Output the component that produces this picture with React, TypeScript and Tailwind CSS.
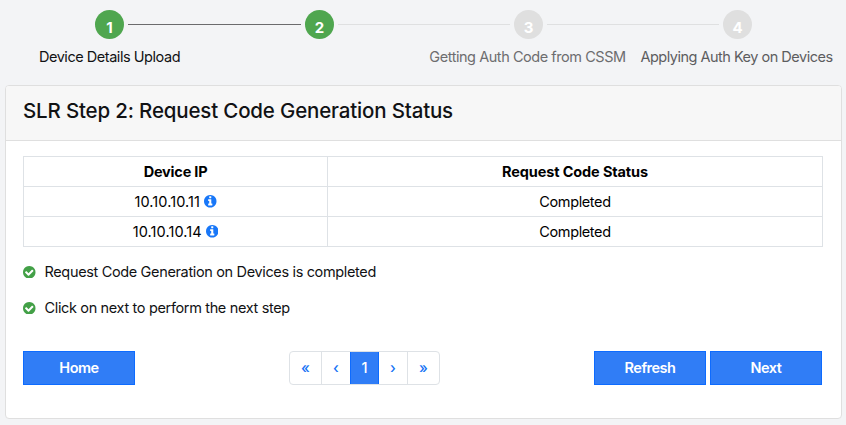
const DISC =
  "q0 209-103 385.5t-279.5 279.5-385.5 103-385.5-103-279.5-279.5-103-385.5 103-385.5 279.5-279.5 385.5-103 385.5 103 279.5 279.5 103 385.5z";

function InfoIcon() {
  return (
    <svg viewBox="128 128 1536 1536" className="size-[12.5px] fill-[#1877f8]">
      <path
        d={
          "M1152 1376v-160q0-14-9-23t-23-9h-96v-512q0-14-9-23t-23-9h-320q-14 0-23 9t-9 23v160q0 14 9 23t23 9h96v320h-96q-14 0-23 9t-9 23v160q0 14 9 23t23 9h448q14 0 23-9t9-23zm-128-896v-160q0-14-9-23t-23-9h-192q-14 0-23 9t-9 23v160q0 14 9 23t23 9h192q14 0 23-9t9-23zm640 416" +
          DISC
        }
      />
    </svg>
  );
}

function CheckIcon() {
  return (
    <svg viewBox="128 128 1536 1536" className="size-[12.5px] fill-[#43a047]">
      <path
        d={
          "M1412 734q0-28-18-46l-91-90q-19-19-45-19t-45 19l-408 407-226-226q-19-19-45-19t-45 19l-91 90q-18 18-18 46 0 27 18 45l362 362q19 19 45 19 27 0 46-19l543-543q18-18 18-45zm252 162" +
          DISC
        }
      />
    </svg>
  );
}

const devices = [
  { ip: "10.10.10.11", status: "Completed" },
  { ip: "10.10.10.14", status: "Completed" },
];

function StepCircle({ n, done }: { n: number; done?: boolean }) {
  return (
    <div
      className={`flex size-[29px] shrink-0 items-center justify-center rounded-full pt-[5px] text-[15px] leading-none font-bold text-white ${done ? "bg-[#4fa64f]" : "bg-[#dfdfdf]"}`}
    >
      {n}
    </div>
  );
}

function Stepper() {
  return (
    <nav className="h-[85px] pt-[10px]">
      <div className="flex items-center gap-1 pr-[94px] pl-[95px]">
        <StepCircle n={1} done />
        <div className="h-px w-[173px] bg-[#6b6b6d]" />
        <StepCircle n={2} done />
        <div className="h-px flex-1 bg-[#dfe0e1]" />
        <StepCircle n={3} />
        <div className="h-px flex-1 bg-[#dfe0e1]" />
        <StepCircle n={4} />
      </div>
      <div className="ml-[5px] grid w-[836px] grid-cols-4 pt-[8px] text-center leading-5 whitespace-nowrap">
        <span className="tracking-[-0.46px]">Device Details Upload</span>
        <span />
        <span className="tracking-[-0.45px] text-[#6d6d6f]">Getting Auth Code from CSSM</span>
        <span className="tracking-[-0.5px] text-[#5d5d5f]">Applying Auth Key on Devices</span>
      </div>
    </nav>
  );
}

function Message({ text }: { text: string }) {
  return (
    <p className="flex h-9 items-center gap-[9px]">
      <CheckIcon />
      <span className="tracking-[-0.35px]">{text}</span>
    </p>
  );
}

function Button({ label }: { label: string }) {
  return (
    <button className="h-[34px] w-[112px] border border-[#0d6bff] bg-[#307df6] font-semibold tracking-[-0.5px] text-white">
      {label}
    </button>
  );
}

function Pagination() {
  return (
    <div className="flex h-[34px] w-[151px] overflow-hidden rounded border border-[#dee2e6] font-medium text-[#1673f5]">
      <button className="w-8 border-r border-[#dee2e6]">«</button>
      <button className="w-7">‹</button>
      <button className="-my-px h-[34px] w-[29px] border border-[#0d6bff] bg-[#307df6] text-white">1</button>
      <button className="w-[29px] border-r border-[#dee2e6]">›</button>
      <button className="flex-1">»</button>
    </div>
  );
}

export default function App() {
  return (
    <div className="h-[425px] w-[846px] overflow-hidden bg-[#f3f4f6] font-[Inter,sans-serif] text-[14.5px] text-[#111214]">
      <Stepper />
      <main className="ml-[5px] h-[334px] w-[837px] rounded-[4px] border border-[#dfdfdf] bg-white">
        <header className="flex h-[55px] items-center rounded-t-[3px] border-b border-[#dfdfdf] bg-[#f7f7f7] px-[17px] pb-[4px]">
          <h1 className="text-[20.5px] font-medium tracking-[-0.17px]">SLR Step 2: Request Code Generation Status</h1>
        </header>
        <section className="px-[17px] pt-[15px]">
          <table className="w-[800px] table-fixed border-collapse text-center leading-5 text-black">
            <thead>
              <tr className="h-[30px]">
                <th className="w-[304px] border border-[#dee2e6] p-0 font-bold tracking-[-0.2px]">Device IP</th>
                <th className="border border-[#dee2e6] p-0 font-bold tracking-[-0.12px]">Request Code Status</th>
              </tr>
            </thead>
            <tbody>
              {devices.map((d) => (
                <tr key={d.ip} className="h-[30px]">
                  <td className="border border-[#dee2e6] p-0">
                    <span className="inline-flex items-center gap-1">
                      <span className="tracking-[0.1px]">{d.ip}</span>
                      <InfoIcon />
                    </span>
                  </td>
                  <td className="border border-[#dee2e6] p-0 tracking-[-0.38px]">{d.status}</td>
                </tr>
              ))}
            </tbody>
          </table>
          <div className="pt-[7px]">
            <Message text="Request Code Generation on Devices is completed" />
            <Message text="Click on next to perform the next step" />
          </div>
          <div className="flex w-[799px] items-center pt-[25px]">
            <Button label="Home" />
            <div className="ml-[154px]">
              <Pagination />
            </div>
            <div className="ml-auto flex gap-1">
              <Button label="Refresh" />
              <Button label="Next" />
            </div>
          </div>
        </section>
      </main>
    </div>
  );
}
